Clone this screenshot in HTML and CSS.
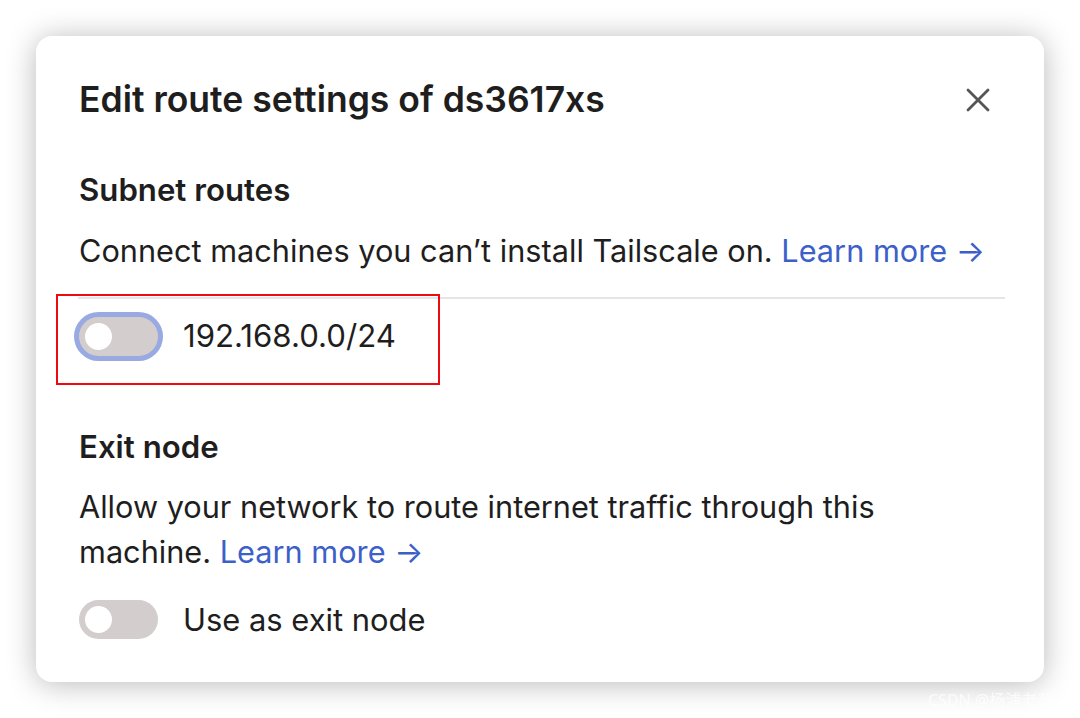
FILE: index.html
```html
<!DOCTYPE html>
<html>
<head>
<meta charset="utf-8">
<link rel="stylesheet" href="styles.css">
</head>
<body>
<div class="card">
  <div class="header">
    <h1 class="title">Edit route settings of ds3617xs</h1>
    <button class="close" aria-label="Close">
      <svg width="28" height="28" viewBox="0 0 28 28"><path d="M4 4 L24 24 M24 4 L4 24" stroke="#575656" stroke-width="2.8" stroke-linecap="round" fill="none"/></svg>
    </button>
  </div>

  <h2 class="heading first">Subnet routes</h2>
  <p class="text">Connect machines you can’t install Tailscale on. <a class="link">Learn more →</a></p>
  <div class="divider"></div>
  <div class="row routes">
    <span class="toggle focused"><span class="knob"></span></span>
    <span class="label wide">192.168.0.0/24</span>
  </div>

  <h2 class="heading exit">Exit node</h2>
  <p class="text tight"><span>Allow your network to route internet traffic through this</span> <span>machine.</span> <a class="link">Learn more →</a></p>
  <div class="row exitrow">
    <span class="toggle"><span class="knob"></span></span>
    <span class="label">Use as exit node</span>
  </div>

  <div class="annotation"></div>
</div>
<div class="watermark">CSDN @杨浦老苏</div>
</body>
</html>
```
FILE: styles.css
```css
html, body {
  margin: 0;
  padding: 0;
  background: #ffffff;
}
body {
  padding: 36px;
  width: 1008px;
  font-family: Inter, "Noto Sans", "Noto Sans CJK SC", sans-serif;
  color: #1f1e1e;
  position: relative;
  height: 646px;
}
.card {
  position: relative;
  background: #fff;
  border-radius: 16px;
  box-shadow: 0 2px 30px rgba(0, 0, 0, 0.28);
  padding: 42px 39px 42px 42px;
  height: 646px;
  box-sizing: border-box;
}
.header {
  display: flex;
  align-items: center;
  justify-content: space-between;
}
.title {
  margin: 0;
  font-size: 35.5px;
  font-weight: 600;
  line-height: 44px;
  padding-left: 1px;
}
.close {
  border: none;
  background: none;
  padding: 0;
  margin-right: 13.5px;
  width: 28px;
  height: 28px;
  display: flex;
}
.heading {
  margin: 0;
  font-size: 31.2px;
  font-weight: 600;
  line-height: 44.8px;
  padding-left: 1px;
}
.heading.first { margin-top: 45.6px; }
.heading.exit { margin-top: 68.6px; }
.text {
  margin: 16px 0 0;
  font-size: 30.7px;
  line-height: 45px;
  padding-left: 1px;
}
.text.tight { margin-top: 14px; }
.link {
  color: #3d5fc9;
  text-decoration: none;
}
.divider {
  margin-top: 24px;
  height: 2px;
  background: #e8e4e4;
}
.row {
  display: flex;
  align-items: center;
  gap: 25px;
  font-size: 30.9px;
}
.row.routes { margin-top: 18px; padding-left: 1px; }
.row.exitrow { margin-top: 26px; padding-left: 1px; }
.label.wide {
  font-size: 31.2px;
}
.toggle {
  width: 79px;
  height: 39px;
  border-radius: 20px;
  background: #d3cdcd;
  display: flex;
  align-items: center;
  padding-left: 6px;
  box-sizing: border-box;
  flex: none;
}
.toggle.focused {
  box-shadow: 0 0 0 5px #98aae1;
}
.knob {
  width: 27px;
  height: 27px;
  border-radius: 50%;
  background: #fff;
}
.label {
  line-height: 39px;
}
.annotation {
  position: absolute;
  left: 20px;
  top: 258px;
  width: 384px;
  height: 91px;
  border: 2px solid #ee0a10;
  box-sizing: border-box;
}
.watermark {
  position: absolute;
  left: 928px;
  top: 687px;
  font-size: 16px;
  white-space: nowrap;
  color: rgba(255, 255, 255, 0.8);
  font-family: "Noto Sans", "Noto Sans CJK SC", sans-serif;
}
```
